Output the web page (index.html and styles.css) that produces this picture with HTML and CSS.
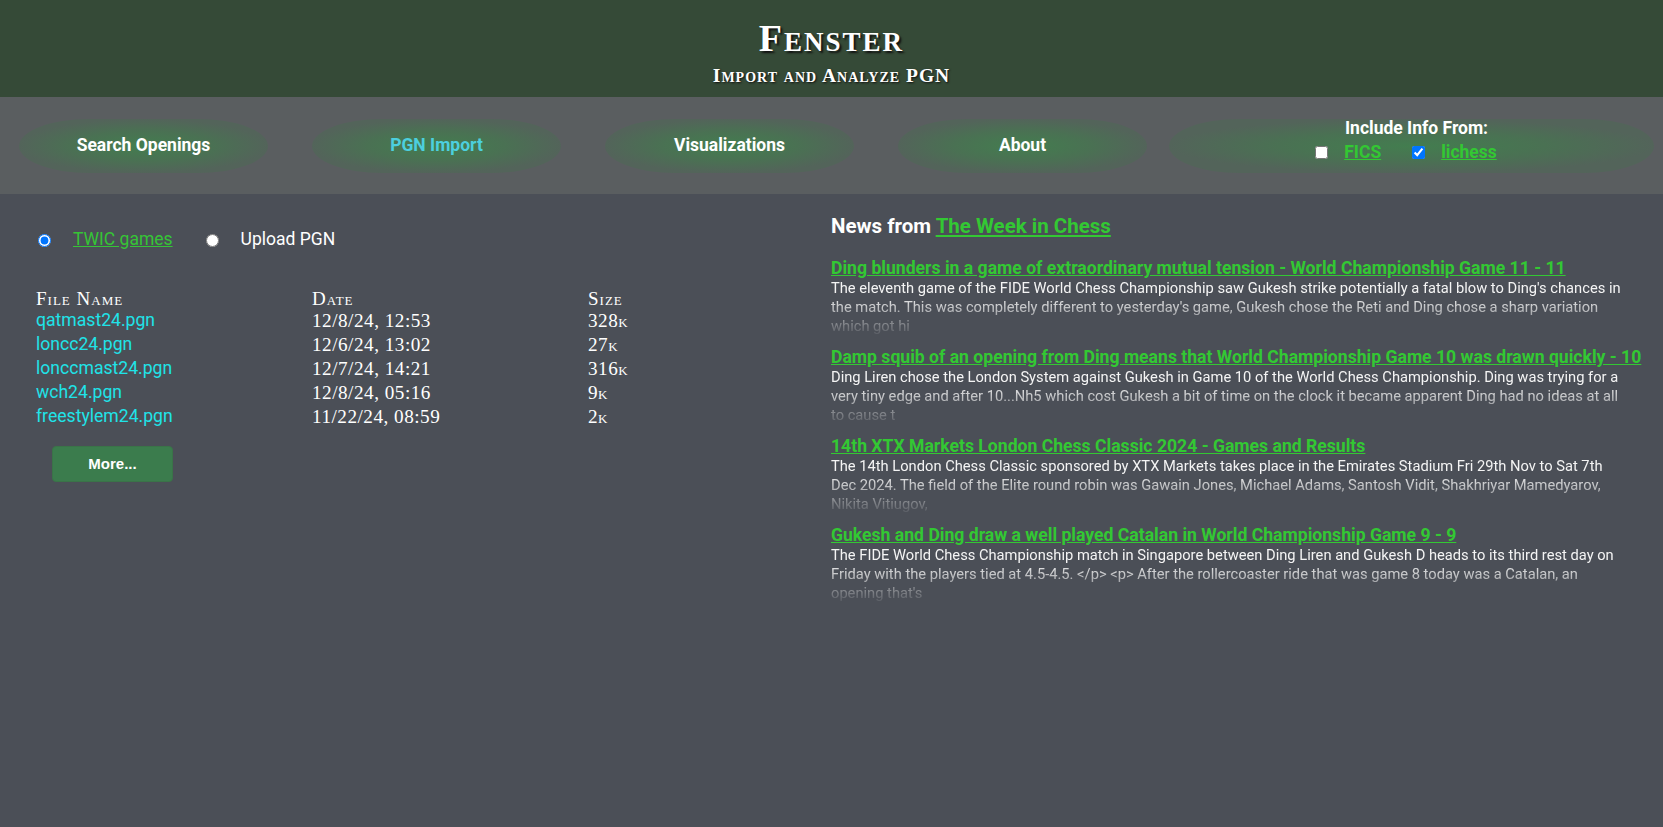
FILE: index.html
```html
<!DOCTYPE html>
<html lang="en">
<head>
<meta charset="utf-8">
<title>Fenster - Import and Analyze PGN</title>
<link rel="stylesheet" href="styles.css">
</head>
<body>
<header class="masthead">
  <h1 class="masthead-title">Fenster</h1>
  <p class="masthead-sub">Import and Analyze PGN</p>
</header>

<nav class="menu">
  <a class="pill" href="#">Search Openings</a>
  <a class="pill pill-active" href="#">PGN Import</a>
  <a class="pill" href="#">Visualizations</a>
  <a class="pill pill-tight" href="#">About</a>
  <div class="pill pill-wide">
    <div class="include-title">Include Info From:</div>
    <div class="include-row">
      <input type="checkbox" class="include-box">
      <a class="include-link" href="#">FICS</a>
      <input type="checkbox" class="include-box" checked>
      <a class="include-link" href="#">lichess</a>
    </div>
  </div>
</nav>

<main class="content">
  <section class="games">
    <div class="source-row">
      <label class="source">
        <input type="radio" name="src" checked>
        <a class="source-link" href="#">TWIC games</a>
      </label>
      <label class="source">
        <input type="radio" name="src">
        <span class="source-text">Upload PGN</span>
      </label>
    </div>

    <div class="files">
      <div class="files-head">File Name</div>
      <div class="files-head">Date</div>
      <div class="files-head">Size</div>

      <a class="file-name" href="#">qatmast24.pgn</a>
      <div class="file-meta">12/8/24, 12:53</div>
      <div class="file-meta">328k</div>

      <a class="file-name" href="#">loncc24.pgn</a>
      <div class="file-meta">12/6/24, 13:02</div>
      <div class="file-meta">27k</div>

      <a class="file-name" href="#">lonccmast24.pgn</a>
      <div class="file-meta">12/7/24, 14:21</div>
      <div class="file-meta">316k</div>

      <a class="file-name" href="#">wch24.pgn</a>
      <div class="file-meta">12/8/24, 05:16</div>
      <div class="file-meta">9k</div>

      <a class="file-name" href="#">freestylem24.pgn</a>
      <div class="file-meta">11/22/24, 08:59</div>
      <div class="file-meta">2k</div>
    </div>

    <button class="more-btn" type="button">More...</button>
  </section>

  <section class="news">
    <h2 class="news-heading">News from <a class="news-source" href="#">The Week in Chess</a></h2>

    <article class="news-item">
      <a class="news-title" href="#">Ding blunders in a game of extraordinary mutual tension - World Championship Game 11 - 11</a>
      <p class="news-text">The eleventh game of the FIDE World Chess Championship saw Gukesh strike potentially a fatal blow to Ding's chances in the match. This was completely different to yesterday's game, Gukesh chose the Reti and Ding chose a sharp variation which got hi</p>
    </article>

    <article class="news-item">
      <a class="news-title" href="#">Damp squib of an opening from Ding means that World Championship Game 10 was drawn quickly - 10</a>
      <p class="news-text">Ding Liren chose the London System against Gukesh in Game 10 of the World Chess Championship. Ding was trying for a very tiny edge and after 10...Nh5 which cost Gukesh a bit of time on the clock it became apparent Ding had no ideas at all to cause t</p>
    </article>

    <article class="news-item">
      <a class="news-title" href="#">14th XTX Markets London Chess Classic 2024 - Games and Results</a>
      <p class="news-text">The 14th London Chess Classic sponsored by XTX Markets takes place in the Emirates Stadium Fri 29th Nov to Sat 7th Dec 2024. The field of the Elite round robin was Gawain Jones, Michael Adams, Santosh Vidit, Shakhriyar Mamedyarov, Nikita Vitiugov,</p>
    </article>

    <article class="news-item">
      <a class="news-title" href="#">Gukesh and Ding draw a well played Catalan in World Championship Game 9 - 9</a>
      <p class="news-text">The FIDE World Chess Championship match in Singapore between Ding Liren and Gukesh D heads to its third rest day on Friday with the players tied at 4.5-4.5. &lt;/p&gt; &lt;p&gt; After the rollercoaster ride that was game 8 today was a Catalan, an opening that's</p>
    </article>
  </section>
</main>
</body>
</html>
```

FILE: styles.css
```css
* { box-sizing: border-box; }

html, body {
  margin: 0;
  padding: 0;
}

body {
  min-height: 100vh;
  background: #4b4f57;
  font-family: Roboto, "Liberation Sans", sans-serif;
  color: #ffffff;
  display: flex;
  flex-direction: column;
}

/* ---------- header ---------- */
.masthead {
  height: 97px;
  background: #354a37;
  text-align: center;
  padding-top: 16px;
}

.masthead-title {
  margin: 0;
  font-family: "Liberation Serif", "DejaVu Serif", serif;
  font-variant: small-caps;
  font-weight: bold;
  font-size: 38px;
  line-height: 44px;
  letter-spacing: 2px;
  text-shadow: 2px 2px 2px #111;
}

.masthead-sub {
  margin: 5px 0 0;
  font-family: "Liberation Serif", "DejaVu Serif", serif;
  font-variant: small-caps;
  font-weight: bold;
  font-size: 19.5px;
  line-height: 22px;
  letter-spacing: 1px;
  text-shadow: 1px 1px 2px #111;
}

/* ---------- menu ---------- */
.menu {
  height: 97px;
  background: #5a5e60;
  display: flex;
  align-items: center;
  padding-left: 19px;
}

.pill {
  width: 249px;
  height: 54px;
  margin-right: 44px;
  flex: none;
  border-radius: 70px / 27px;
  background: radial-gradient(ellipse closest-side, #437d4f 0%, #4a7153 55%, #53645a 100%);
  display: flex;
  align-items: center;
  justify-content: center;
  color: #ffffff;
  font-weight: bold;
  font-size: 17.5px;
  line-height: 20px;
  padding-bottom: 2px;
  text-decoration: none;
}

.pill-active { color: #4ccfde; }
.pill-tight { margin-right: 22px; }

.pill-wide {
  width: 485px;
  margin-right: 0;
  flex-direction: column;
  justify-content: center;
  gap: 3px;
  padding-bottom: 10px;
}

.include-title {
  font-size: 17.5px;
  line-height: 20px;
  font-weight: bold;
  padding-left: 10px;
}

.include-row {
  display: flex;
  align-items: center;
  line-height: 22px;
  padding-right: 11px;
}

.include-box {
  margin: 0 16px 0 0;
  width: 13px;
  height: 13px;
}

.include-link {
  color: #33c833;
  font-weight: bold;
  font-size: 17.5px;
  margin-right: 31px;
}
.include-link:last-child { margin-right: 0; }

/* ---------- content ---------- */
.content {
  flex: 1;
  display: flex;
}

.games {
  width: 831px;
  flex: none;
  padding: 33px 0 0 36px;
}

.source-row {
  display: flex;
  align-items: center;
  height: 24px;
  padding-left: 2px;
}

.source {
  display: flex;
  align-items: center;
  margin-right: 33px;
  font-size: 17.5px;
}

.source input {
  margin: 2px 22px 0 0;
  width: 13px;
  height: 13px;
}

.source-link { color: #36c436; }
.source-text { color: #ffffff; }

.files {
  display: grid;
  grid-template-columns: 276px 276px auto;
  margin-top: 38px;
  line-height: 23.9px;
}

.files-head {
  font-family: "Liberation Serif", "DejaVu Serif", serif;
  font-variant: small-caps;
  font-size: 19px;
  line-height: 20px;
  letter-spacing: 1px;
  color: #ffffff;
}

.file-name {
  color: #1fe3e8;
  text-decoration: none;
  font-size: 17.6px;
}

.file-meta {
  font-family: "Liberation Serif", "DejaVu Serif", serif;
  font-variant: small-caps;
  font-size: 19.2px;
  letter-spacing: 0.5px;
  color: #ffffff;
}

.more-btn {
  margin: 17px 0 0 16px;
  width: 121px;
  height: 36px;
  border: 1px solid #3a7348;
  border-radius: 4px;
  background: #3b7c4d;
  color: #ffffff;
  font-family: "Liberation Sans", Arial, sans-serif;
  font-weight: bold;
  font-size: 15px;
}

/* ---------- news ---------- */
.news {
  flex: 1;
  padding: 19px 18px 0 0;
}

.news-heading {
  margin: 0 0 17px;
  font-size: 20.5px;
  line-height: 27px;
  font-weight: bold;
}

.news-source { color: #33c833; }

.news-item {
  margin-bottom: 10px;
}

.news-title {
  display: block;
  color: #33c833;
  font-weight: bold;
  font-size: 17.6px;
  line-height: 22px;
}

.news-text {
  margin: 0;
  padding-right: 20px;
  font-size: 14.7px;
  line-height: 19px;
  height: 57px;
  overflow: hidden;
  color: #f4f4f4;
  -webkit-mask-image: linear-gradient(to bottom, #000 28%, rgba(0,0,0,0.05) 100%);
  mask-image: linear-gradient(to bottom, #000 28%, rgba(0,0,0,0.05) 100%);
}
```
